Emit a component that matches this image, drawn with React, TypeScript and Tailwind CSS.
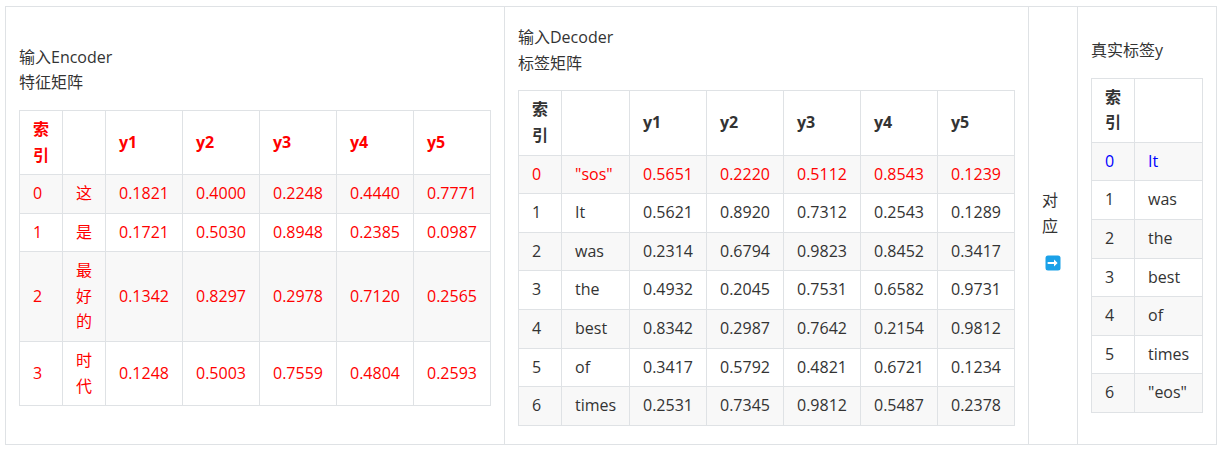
import React from "react";

type Row = {
  cells: string[];
  tone?: "red" | "blue";
  shaded?: boolean;
};

const encoderRows: Row[] = [
  { cells: ["0", "这", "0.1821", "0.4000", "0.2248", "0.4440", "0.7771"], tone: "red", shaded: true },
  { cells: ["1", "是", "0.1721", "0.5030", "0.8948", "0.2385", "0.0987"], tone: "red" },
  { cells: ["2", "最好的", "0.1342", "0.8297", "0.2978", "0.7120", "0.2565"], tone: "red", shaded: true },
  { cells: ["3", "时代", "0.1248", "0.5003", "0.7559", "0.4804", "0.2593"], tone: "red" },
];

const decoderRows: Row[] = [
  { cells: ["0", '"sos"', "0.5651", "0.2220", "0.5112", "0.8543", "0.1239"], tone: "red", shaded: true },
  { cells: ["1", "It", "0.5621", "0.8920", "0.7312", "0.2543", "0.1289"] },
  { cells: ["2", "was", "0.2314", "0.6794", "0.9823", "0.8452", "0.3417"], shaded: true },
  { cells: ["3", "the", "0.4932", "0.2045", "0.7531", "0.6582", "0.9731"] },
  { cells: ["4", "best", "0.8342", "0.2987", "0.7642", "0.2154", "0.9812"], shaded: true },
  { cells: ["5", "of", "0.3417", "0.5792", "0.4821", "0.6721", "0.1234"] },
  { cells: ["6", "times", "0.2531", "0.7345", "0.9812", "0.5487", "0.2378"], shaded: true },
];

const labelRows: Row[] = [
  { cells: ["0", "It"], tone: "blue", shaded: true },
  { cells: ["1", "was"] },
  { cells: ["2", "the"], shaded: true },
  { cells: ["3", "best"] },
  { cells: ["4", "of"], shaded: true },
  { cells: ["5", "times"] },
  { cells: ["6", '"eos"'], shaded: true },
];

const toneClass = (tone?: "red" | "blue") =>
  tone === "red" ? "text-[#ff0000]" : tone === "blue" ? "text-[#0000ff]" : "text-[#333333]";

const Cell = ({ children, className }: { children?: React.ReactNode; className?: string }) => (
  <div className={"flex items-center border-r border-b border-[#dfe2e5] px-[13px] py-[6px] " + (className ?? "")}>
    <span className="min-w-0">{children}</span>
  </div>
);

const Grid = ({
  cols,
  header,
  headerTone,
  rows,
}: {
  cols: string;
  header: string[];
  headerTone?: "red";
  rows: Row[];
}) => (
  <div className={"grid border-t border-l border-[#dfe2e5] " + cols}>
    {header.map((h, i) => (
      <Cell key={"h" + i} className={"bg-white font-bold " + toneClass(headerTone)}>
        {h}
      </Cell>
    ))}
    {rows.map((row, r) =>
      row.cells.map((c, i) => (
        <Cell
          key={r + "-" + i}
          className={(row.shaded ? "bg-[#f8f8f8] " : "bg-white ") + toneClass(row.tone)}
        >
          {c}
        </Cell>
      ))
    )}
  </div>
);

const ArrowEmoji = () => (
  <svg viewBox="0 0 16 16" className="ml-[3px] mt-[16px] mb-[-8px] h-[16px] w-[16px]">
    <rect x="0.5" y="0.5" width="15" height="15" rx="2.5" fill="#1ba1e8" />
    <path d="M3.5 8h7" stroke="#ffffff" strokeWidth="2.2" strokeLinecap="round" />
    <path d="M9 4.6 12.6 8 9 11.4z" fill="#ffffff" />
  </svg>
);

export default function App() {
  return (
    <div className="min-h-[454px] bg-white pl-[5px] pt-[6px] font-['Open_Sans','Noto_Sans_CJK_SC',sans-serif] text-[16px] leading-[1.6] text-[#333333]">
      <div className="flex h-[439px] w-[1212px] border border-[#dfe2e5]">
        <div className="flex w-[498px] flex-col justify-center px-[13px]">
          <div className="mb-[14px]">
            <div>输入Encoder</div>
            <div>特征矩阵</div>
          </div>
          <Grid
            cols="grid-cols-[43px_43px_77px_77px_77px_77px_77px]"
            header={["索引", "", "y1", "y2", "y3", "y4", "y5"]}
            headerTone="red"
            rows={encoderRows}
          />
        </div>
        <div className="flex w-[524px] flex-col justify-center border-l border-[#dfe2e5] px-[13px]">
          <div className="mb-[14px]">
            <div>输入Decoder</div>
            <div>标签矩阵</div>
          </div>
          <Grid
            cols="grid-cols-[43px_68px_77px_77px_77px_77px_77px]"
            header={["索引", "", "y1", "y2", "y3", "y4", "y5"]}
            rows={decoderRows}
          />
        </div>
        <div className="flex w-[49px] flex-col justify-center border-l border-[#dfe2e5] px-[13px]">
          <div>对</div>
          <div>应</div>
          <ArrowEmoji />
        </div>
        <div className="flex w-[139px] flex-col justify-center border-l border-[#dfe2e5] px-[13px]">
          <div className="mb-[14px] whitespace-nowrap">真实标签y</div>
          <Grid cols="grid-cols-[43px_68px]" header={["索引", ""]} rows={labelRows} />
        </div>
      </div>
    </div>
  );
}
